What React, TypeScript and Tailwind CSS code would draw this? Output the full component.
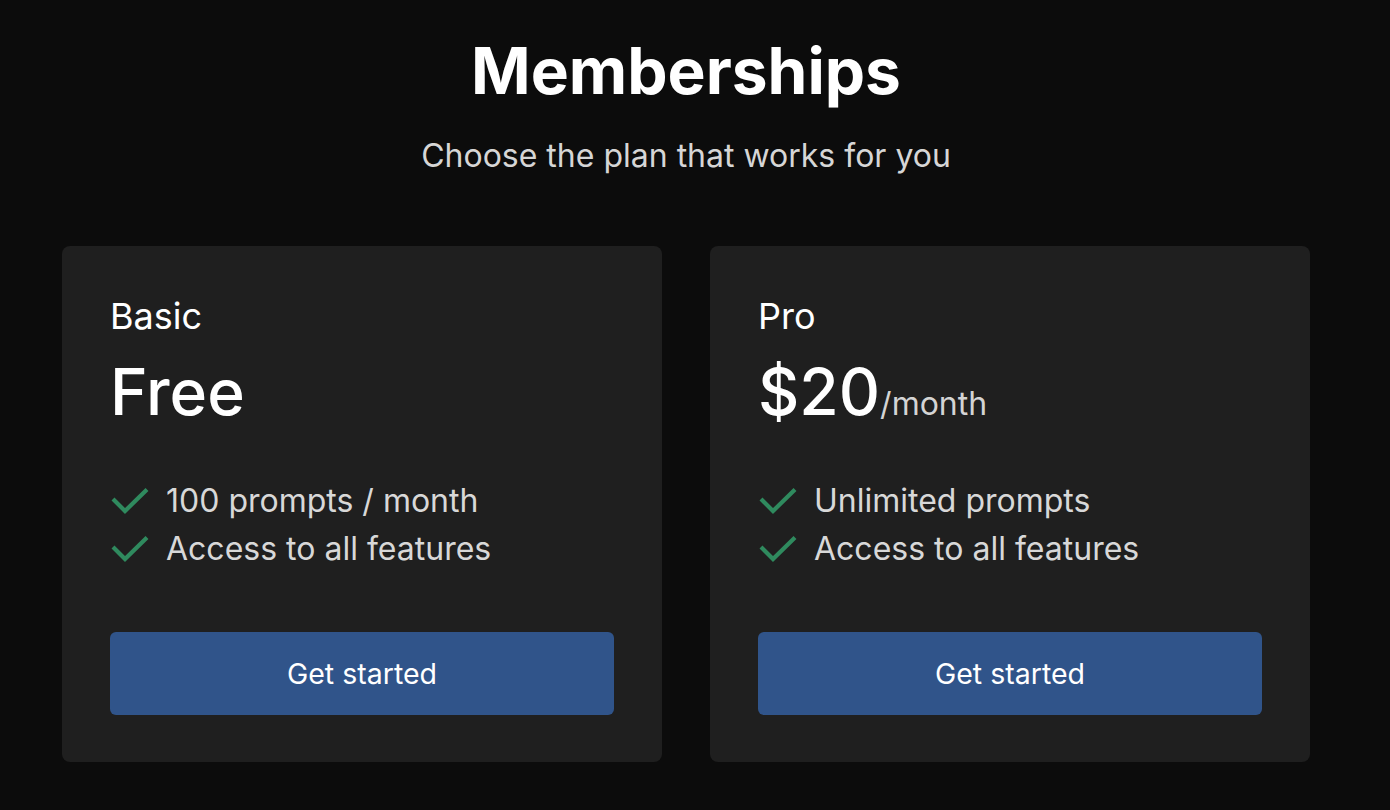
import React from "react";

type Plan = {
  name: string;
  price: string;
  period?: string;
  features: string[];
};

const plans: Plan[] = [
  { name: "Basic", price: "Free", features: ["100 prompts / month", "Access to all features"] },
  { name: "Pro", price: "$20", period: "/month", features: ["Unlimited prompts", "Access to all features"] },
];

function Check() {
  return (
    <svg width="40" height="26" viewBox="0 0 40 26" fill="none" className="shrink-0">
      <polyline
        points="3,11 15,23 37,1.5"
        stroke="#2f8a5e"
        strokeWidth="4.2"
        strokeLinecap="butt"
        strokeLinejoin="miter"
      />
    </svg>
  );
}

function PlanCard({ plan }: { plan: Plan }) {
  return (
    <div className="w-[600px] rounded-lg bg-[#1f1f1f] px-12 pt-[50px] pb-[47px]">
      <div className="text-4xl text-white">{plan.name}</div>
      <div className="mt-[24px] flex items-baseline">
        <span className="text-[64px] leading-none font-medium text-white">{plan.price}</span>
        {plan.period && <span className="text-[32px] leading-none text-[#d4d4d4]">{plan.period}</span>}
      </div>
      <ul className="mt-[53px] flex flex-col">
        {plan.features.map((f) => (
          <li key={f} className="flex items-center gap-[16px] text-[32px] leading-[48px] text-[#d8d8d8]">
            <Check />
            <span>{f}</span>
          </li>
        ))}
      </ul>
      <button className="mt-[59px] flex h-[83px] w-full items-center justify-center rounded-md bg-[#30548a] pt-[2px] text-[28.5px] text-white">
        Get started
      </button>
    </div>
  );
}

export default function App() {
  return (
    <div
      className="min-h-[810px] w-full bg-[#0c0c0c] pr-[18px]"
      style={{ fontFamily: "Inter, 'Noto Sans', sans-serif" }}
    >
      <div className="flex flex-col items-center pt-[39px]">
        <h1 className="text-[64px] leading-none font-bold text-white">Memberships</h1>
        <p className="mt-[37px] text-[32px] leading-none text-[#d6d6d6]">Choose the plan that works for you</p>
        <div className="mt-[74px] flex gap-12">
          {plans.map((p) => (
            <PlanCard key={p.name} plan={p} />
          ))}
        </div>
      </div>
    </div>
  );
}
